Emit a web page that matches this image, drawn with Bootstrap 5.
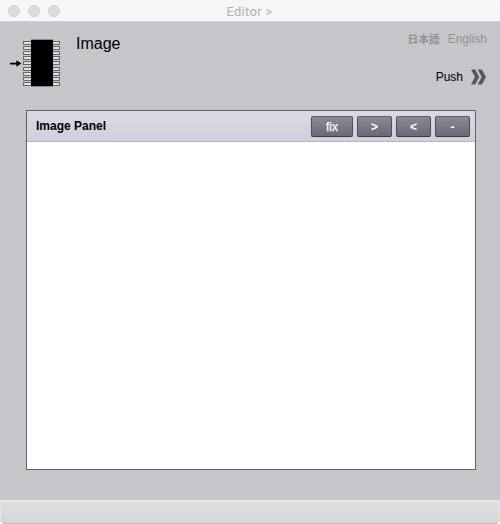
<!DOCTYPE html>
<html lang="en">
<head>
<meta charset="utf-8">
<meta name="viewport" content="width=device-width, initial-scale=1">
<title>Editor</title>
<link href="https://cdn.jsdelivr.net/npm/bootstrap@5.3.0/dist/css/bootstrap.min.css" rel="stylesheet">
<style>
body{font-family:"Liberation Sans",Arial,"Noto Sans CJK JP",sans-serif;font-size:12px;line-height:16px;color:#000;background:#fff}
.window{width:500px;height:524px;background:#c6c5ca;border-radius:5px}
.titlebar{height:22px;background:#f6f6f6;border-bottom:1px solid #cfced1}
.lights{width:69px;gap:8px;padding-left:8px}
.light{width:12px;height:12px;background:#dcdcdc;border:1px solid #cfcfcf}
.title{font-family:Roboto,"Liberation Sans",sans-serif;font-size:13px;letter-spacing:.3px;color:#b1b1b1;padding:3px 70px 0 0}
.top{height:88px;padding:9px 13px 0 8px}
.chip{margin-top:1px}
.page-name{font-size:16px;line-height:20px;margin:3px 0 0 14px}
.lang{color:#929195;gap:8px;font-size:12px}
.lang .ja{font-size:10.7px;font-weight:700}
.push{gap:7px;margin-top:22px}
.panel{margin:0 24px 0 26px;height:360px;border:1px solid #616065}
.panel-head{height:31px;background:linear-gradient(#dadae5,#d0cfdb);border-bottom:1px solid #b5b5c1;padding:0 5px 0 9px}
.tool{width:35px;height:21px;padding:1px 0 0;font-size:12px;line-height:18px;font-weight:700;color:#fff;background:linear-gradient(#8b8997,#6b6977);border:1px solid #504e59;border-top-color:#5f5e69;border-bottom-color:#3c3b44;border-radius:2px;box-shadow:0 0 1px #77768088}
.tool.fix{width:42px;font-weight:400;-webkit-text-stroke:.25px #fff}
.foot{height:24px;background:linear-gradient(#dfdfdf,#d6d6d6);border:1px solid #e6e6e6;border-top:2px solid #e6e6e6;border-bottom-color:#bdbdbd;border-radius:0 0 5px 5px}
</style>
</head>
<body class="overflow-hidden">
<div class="window d-flex flex-column overflow-hidden">
  <header class="titlebar d-flex align-items-center flex-shrink-0">
    <div class="lights d-flex"><span class="light rounded-circle"></span><span class="light rounded-circle"></span><span class="light rounded-circle"></span></div>
    <div class="title flex-grow-1 text-center">Editor &gt;</div>
  </header>
  <div class="top d-flex flex-shrink-0">
    <svg class="chip" width="54" height="60" viewBox="8 32 54 60" aria-hidden="true" shape-rendering="crispEdges">
      <defs><g id="pin"><path fill="#dedde0" d="M23 41h8v3h-8zM53 41h7v3h-7z"/><path fill="none" stroke="#68676b" d="M31 41.5h-7.5v2.5h7.5M53 41.5h6.5v2.5H53"/></g></defs>
      <use href="#pin"/><use href="#pin" y="5"/><use href="#pin" y="10"/><use href="#pin" y="15"/><use href="#pin" y="20"/><use href="#pin" y="26"/><use href="#pin" y="31"/><use href="#pin" y="36"/><use href="#pin" y="41"/>
      <path fill="#8a898e" d="M31 39h22v1H31zM31 86h22v1H31z"/><path d="M31 40h22v46H31z"/>
      <path shape-rendering="auto" d="M10 62.700h6.300v-2.500l5.200 3.300-5.200 3.300v-2.300H10z"/>
    </svg>
    <h1 class="page-name fw-normal">Image</h1>
    <div class="ms-auto d-flex flex-column align-items-end">
      <nav class="lang d-flex"><span class="ja">日本語</span><span>English</span></nav>
      <div class="push d-flex align-items-center"><span>Push</span>
        <svg width="17" height="16" viewBox="0 0 17 16" aria-hidden="true"><path fill="#58575b" d="M1 .5h4.200L9.300 8l-4.100 7.500H1L4.900 8zM7.700 .5h4.200L16 8l-4.100 7.500H7.700L11.600 8z"/></svg>
      </div>
    </div>
  </div>
  <main class="panel bg-white flex-shrink-0">
    <div class="panel-head d-flex align-items-center justify-content-between">
      <strong>Image Panel</strong>
      <div class="d-flex gap-1"><button class="btn tool fix">fix</button><button class="btn tool">&gt;</button><button class="btn tool">&lt;</button><button class="btn tool">-</button></div>
    </div>
  </main>
  <footer class="foot mt-auto flex-shrink-0"></footer>
</div>
<script src="https://cdn.jsdelivr.net/npm/bootstrap@5.3.0/dist/js/bootstrap.bundle.min.js"></script>
</body>
</html>
